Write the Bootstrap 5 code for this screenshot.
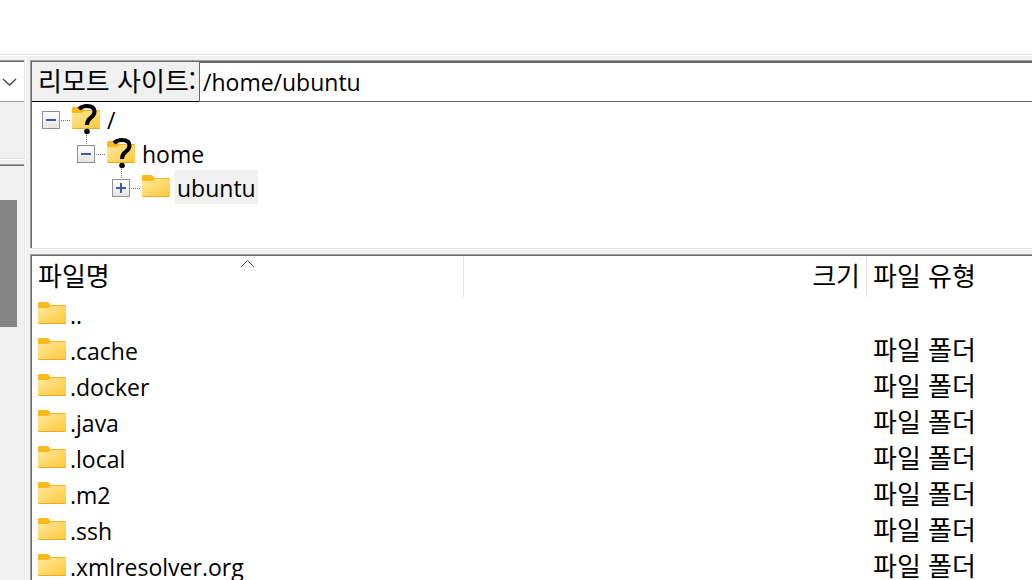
<!DOCTYPE html>
<html lang="ko">
<head>
<meta charset="utf-8">
<meta name="viewport" content="width=device-width, initial-scale=1">
<title>/home/ubuntu</title>
<link rel="stylesheet" href="https://cdn.jsdelivr.net/npm/bootstrap@5.3.0/dist/css/bootstrap.min.css">
<style>
  body { font: 23px/34px "Open Sans", "Noto Sans CJK KR", sans-serif; color: #000; background: #fff; }
  .ko { font-family: "Noto Sans CJK KR", sans-serif; font-size: 26px; }
  .topbar { height: 55px; border-bottom: 1px solid #e3e3e3; }
  .workspace { background: #f0f0f0; border-top: 1px solid #fff; padding-top: 4px; min-height: 0; }
  .sunken { box-shadow: inset 0 1px #a0a0a0, inset 1px 0 #a0a0a0, inset 0 2px #696969, inset 2px 0 #696969, 0 1px #fff; padding: 2px 0 0 2px; }
  .local { width: 26px; flex: none; }
  .local-site, .local-list { box-shadow: inset -1px 0 #fff, inset -2px 0 #e3e3e3, inset 0 1px #a0a0a0, inset 0 2px #696969; padding: 2px 2px 0 0; }
  .local-site { height: 100px; border-bottom: 1px solid #fff; }
  .local-tree { height: 57px; border-bottom: 1px solid #e3e3e3; }
  .combo { height: 40px; width: 100%; background: #fff; border: 0; border-bottom: 1px solid #a0a0a0; padding: 0; display: flex; align-items: center; }
  .local-list { margin-top: 4px; padding-top: 36px; }
  .thumb { width: 17px; height: 127px; background: #858585; }
  .remote { margin-left: 4px; min-width: 0; }
  .remote-site { height: 189px; background: #fff; border-bottom: 1px solid #e3e3e3; }
  .address { height: 40px; }
  .address label { width: 167px; padding-left: 6px; line-height: 36px; background: #f0f0f0; border-bottom: 1px solid #000; white-space: nowrap; }
  .address input { min-width: 0; border: 1px solid #696969; border-right: 0; border-radius: 0; padding: 0 3px; outline: 0; color: #000; font: inherit; background: #fff; }
  .tree, .tree ul { list-style: none; margin: 0; padding: 0; }
  .tree { padding-left: 10px; }
  .tree ul { padding-left: 35px; }
  .node { height: 34px; display: flex; align-items: center; }
  .toggle { width: 18px; height: 18px; padding: 0; border: 1px solid #919191; background: linear-gradient(#fff, #e4e4e4); display: flex; margin-top: 2px; }
  .link { width: 12px; height: 34px; flex: none; }
  .icon { width: 28px; height: 34px; flex: none; overflow: visible; }
  .node .name { padding: 2px 2px 0; line-height: 32px; margin-left: 5px; }
  .picked { background: #f0f0f0; }
  .files-pane { margin-top: 5px; min-height: 0; overflow: hidden; background: #fff; }
  .files { width: 100%; table-layout: fixed; border-collapse: separate; border-spacing: 0; }
  .files th { font-weight: 400; height: 41px; padding: 0 6px 4px; border-right: 1px solid #e5e5e5; position: relative; line-height: 36px; }
  .files th:last-child { border: 0; }
  .files td { height: 36px; padding: 0 6px; line-height: 36px; white-space: nowrap; }
  .files td.ko { padding-bottom: 4px; line-height: 32px; }
  .c-name { width: 432px; } .c-size { width: 403px; }
  .sort { position: absolute; left: 208px; top: 3px; }
  .fname { padding-left: 4px; line-height: 36px; }
  .files .icon { height: 36px; }
</style>
</head>
<body class="vh-100 overflow-hidden d-flex flex-column">
<svg width="0" height="0" class="position-absolute" aria-hidden="true">
  <defs>
    <linearGradient id="face" x1="0" y1="0" x2="1" y2="1"><stop offset="0" stop-color="#ffe8a0"/><stop offset="1" stop-color="#ffc836"/></linearGradient>
    <symbol id="folder" viewBox="0 0 28 22">
      <path d="M0 1.2Q0 0 1.200 0H9q1.500 0 2.500 1.500l1 1.500H28V14H0z" fill="#fbb91c"/>
      <path d="M0 6h9.500q1.200 0 2-.8L13 4h14q1 0 1 1v15.800q0 1.200-1.200 1.200H1.200Q0 22 0 20.800z" fill="url(#face)"/>
      <path d="M0 20.500q0 1 1.200 1h25.600q1.200 0 1.200-1" fill="none" stroke="#eba91f"/>
    </symbol>
    <symbol id="question" viewBox="0 0 22 32">
      <path d="M3 6Q6 3 11 3q7.500 0 7.500 5.500 0 3.500-4 6.500-3.500 2.500-3.500 7" fill="none" stroke="#000" stroke-width="4"/>
      <circle cx="11" cy="28.500" r="2.800" fill="#000"/>
    </symbol>
  </defs>
</svg>
<header class="topbar flex-shrink-0"></header>
<main class="workspace d-flex flex-grow-1">
  <aside class="local d-flex flex-column">
    <div class="local-site">
      <button class="combo" aria-label="로컬 사이트 목록"><svg width="17" height="10" viewBox="0 0 17 10" fill="none" stroke="#444" stroke-width="1.300"><path d="M3 2l6.500 6L16 2"/></svg></button>
      <div class="local-tree"></div>
    </div>
    <div class="local-list flex-grow-1"><div class="thumb"></div></div>
  </aside>
  <div class="remote d-flex flex-column flex-grow-1">
    <section class="remote-site sunken flex-shrink-0">
      <div class="address d-flex">
        <label class="ko flex-shrink-0" for="path">리모트 사이트:</label>
        <input class="flex-grow-1" id="path" type="text" value="/home/ubuntu">
      </div>
      <ul class="tree">
        <li>
          <div class="node"><button class="toggle" aria-label="/ 접기"><svg width="16" height="16"><path d="M3 8h10" stroke="#4058a8" stroke-width="2"/></svg></button><svg class="link"><path d="M1 18.500h10" stroke="#777" stroke-dasharray="1 1"/></svg><svg class="icon"><use href="#folder" y="5" width="28" height="22"/><path d="M14.500 31v14" stroke="#777" stroke-dasharray="1 1"/><use href="#question" x="4" y="1" width="22" height="32"/></svg><span class="name">/</span></div>
          <ul>
            <li>
              <div class="node"><button class="toggle" aria-label="home 접기"><svg width="16" height="16"><path d="M3 8h10" stroke="#4058a8" stroke-width="2"/></svg></button><svg class="link"><path d="M1 18.500h10" stroke="#777" stroke-dasharray="1 1"/></svg><svg class="icon"><use href="#folder" y="5" width="28" height="22"/><path d="M14.500 31v14" stroke="#777" stroke-dasharray="1 1"/><use href="#question" x="4" y="1" width="22" height="32"/></svg><span class="name">home</span></div>
              <ul>
                <li><div class="node"><button class="toggle" aria-label="ubuntu 펼치기"><svg width="16" height="16"><path d="M3 8h10M8 3v10" stroke="#4058a8" stroke-width="2"/></svg></button><svg class="link"><path d="M1 18.500h10" stroke="#777" stroke-dasharray="1 1"/></svg><svg class="icon"><use href="#folder" y="5" width="28" height="22"/></svg><span class="name picked">ubuntu</span></div></li>
              </ul>
            </li>
          </ul>
        </li>
      </ul>
    </section>
    <section class="files-pane sunken flex-grow-1">
      <table class="files">
        <colgroup><col class="c-name"><col class="c-size"><col></colgroup>
        <thead><tr class="ko"><th>파일명<svg class="sort" width="15" height="9" fill="none" stroke="#555"><path d="M1 8l6.500-6.500L14 8"/></svg></th><th class="text-end">크기</th><th>파일 유형</th></tr></thead>
        <tbody>
          <tr><td><div class="d-flex"><svg class="icon"><use href="#folder" y="5" width="28" height="22"/></svg><span class="fname">..</span></div></td><td></td><td></td></tr>
          <tr><td><div class="d-flex"><svg class="icon"><use href="#folder" y="5" width="28" height="22"/></svg><span class="fname">.cache</span></div></td><td></td><td class="ko">파일 폴더</td></tr>
          <tr><td><div class="d-flex"><svg class="icon"><use href="#folder" y="5" width="28" height="22"/></svg><span class="fname">.docker</span></div></td><td></td><td class="ko">파일 폴더</td></tr>
          <tr><td><div class="d-flex"><svg class="icon"><use href="#folder" y="5" width="28" height="22"/></svg><span class="fname">.java</span></div></td><td></td><td class="ko">파일 폴더</td></tr>
          <tr><td><div class="d-flex"><svg class="icon"><use href="#folder" y="5" width="28" height="22"/></svg><span class="fname">.local</span></div></td><td></td><td class="ko">파일 폴더</td></tr>
          <tr><td><div class="d-flex"><svg class="icon"><use href="#folder" y="5" width="28" height="22"/></svg><span class="fname">.m2</span></div></td><td></td><td class="ko">파일 폴더</td></tr>
          <tr><td><div class="d-flex"><svg class="icon"><use href="#folder" y="5" width="28" height="22"/></svg><span class="fname">.ssh</span></div></td><td></td><td class="ko">파일 폴더</td></tr>
          <tr><td><div class="d-flex"><svg class="icon"><use href="#folder" y="5" width="28" height="22"/></svg><span class="fname">.xmlresolver.org</span></div></td><td></td><td class="ko">파일 폴더</td></tr>
        </tbody>
      </table>
    </section>
  </div>
</main>
<script src="https://cdn.jsdelivr.net/npm/bootstrap@5.3.0/dist/js/bootstrap.bundle.min.js"></script>
</body>
</html>
